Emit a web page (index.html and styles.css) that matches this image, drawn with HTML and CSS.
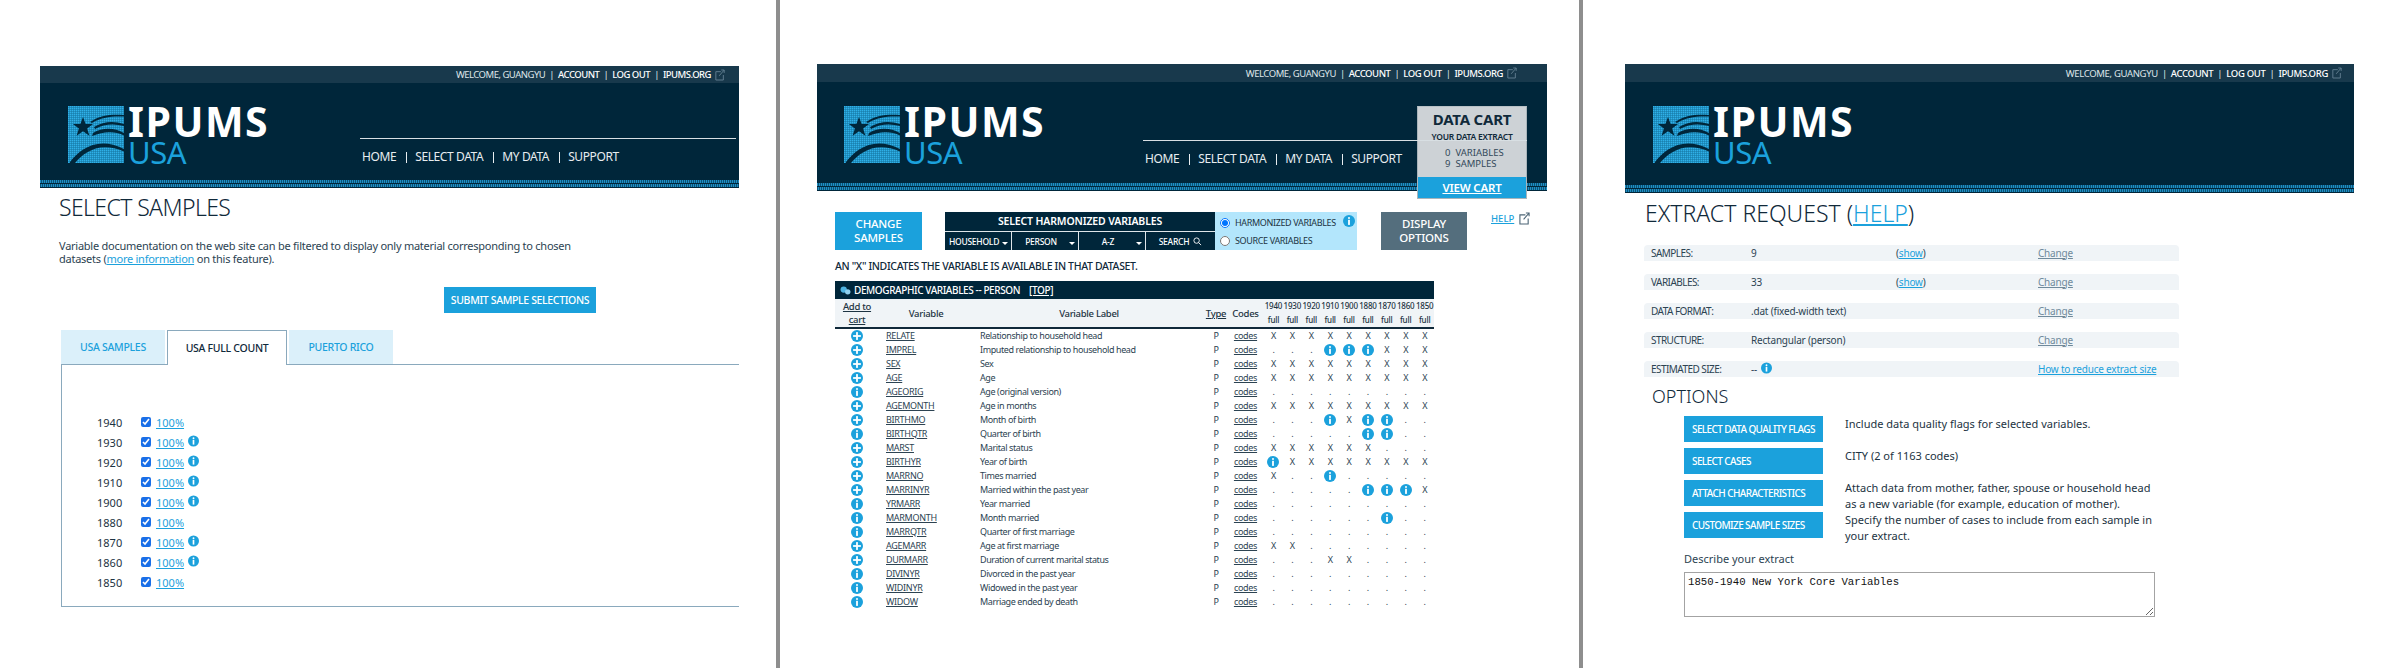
FILE: index.html
```html
<!DOCTYPE html>
<html lang="en">
<head>
<meta charset="utf-8">
<title>IPUMS USA</title>
<link rel="stylesheet" href="styles.css">
</head>
<body>
<svg class="defs" width="0" height="0" aria-hidden="true">
  <defs>
    <symbol id="i-info" viewBox="0 0 20 20"><circle cx="10" cy="10" r="10" fill="#1ba1dc"/><circle cx="10" cy="5" r="1.7" fill="#fff"/><rect x="8.5" y="8" width="3" height="8.5" fill="#fff"/></symbol>
    <symbol id="i-add" viewBox="0 0 20 20"><circle cx="10" cy="10" r="10" fill="#1ba1dc"/><rect x="8.5" y="3.5" width="3" height="13" fill="#fff"/><rect x="3.5" y="8.5" width="13" height="3" fill="#fff"/></symbol>
    <symbol id="i-ext" viewBox="0 0 12 14"><path d="M7 3H1v10h9V7" fill="none" stroke="currentColor" stroke-width="1.2"/><path d="M5 8l6-7M7.5 1H11v3.5" fill="none" stroke="currentColor" stroke-width="1.2"/></symbol>
    <pattern id="dots" width="2" height="2" patternUnits="userSpaceOnUse"><rect width="2" height="2" fill="#12739f"/><rect width="1.5" height="1.5" fill="#2fb0e8"/></pattern>
    <symbol id="i-flag" viewBox="0 0 56 57">
      <rect width="56" height="57" fill="url(#dots)"/>
      <path d="M15 11l2.600 7h7.500l-6 4.500 2.300 7.200-6.400-4.400-6.400 4.400 2.300-7.200-6-4.500h7.500z" fill="#00263a"/>
      <path d="M22 16C32 9 44 8 56 9v1.500C44 10 33 11 24 17zM26 21C36 15 46 15 56 18v2C46 17.500 36 18 27 23zM25 27C35 21 47 22 56 27v2.500C47 25 36 25 24 30z" fill="#00263a"/>
      <path d="M2 56C12 43 30 30 56 43v2.500C32 35 16 46 7 57H2z" fill="#00263a"/>
    </symbol>
  </defs>
</svg>

<main class="page">

  <section class="panel panel-one">
    <header class="site-head">
      <div class="top-bar"><span>WELCOME, GUANGYU</span><b class="sep">|</b><strong>ACCOUNT</strong><b class="sep">|</b><strong>LOG OUT</strong><b class="sep">|</b><strong>IPUMS.ORG</strong><svg class="ext"><use href="#i-ext"/></svg></div>
      <div class="brand-row">
        <div class="logo"><svg class="flag"><use href="#i-flag"/></svg><div class="word"><div class="ipums">IPUMS</div><div class="usa">USA</div></div></div>
        <nav class="nav"><a>HOME</a><a>SELECT DATA</a><a>MY DATA</a><a>SUPPORT</a></nav>
      </div>
      <div class="strip"></div>
    </header>
    <div class="one-body">
      <h1 class="title">SELECT SAMPLES</h1>
      <p class="intro">Variable documentation on the web site can be filtered to display only material corresponding to chosen datasets (<a class="lnk">more information</a> on this feature).</p>
      <div class="submit-row"><a class="btn submit">SUBMIT SAMPLE SELECTIONS</a></div>
      <div class="tabs"><a class="tab">USA SAMPLES</a><a class="tab active">USA FULL COUNT</a><a class="tab">PUERTO RICO</a></div>
      <div class="tab-box">
        <div class="sample"><span class="yr">1940</span><input type="checkbox" checked><a class="lnk">100%</a></div>
        <div class="sample"><span class="yr">1930</span><input type="checkbox" checked><a class="lnk">100%</a><svg class="note"><use href="#i-info"/></svg></div>
        <div class="sample"><span class="yr">1920</span><input type="checkbox" checked><a class="lnk">100%</a><svg class="note"><use href="#i-info"/></svg></div>
        <div class="sample"><span class="yr">1910</span><input type="checkbox" checked><a class="lnk">100%</a><svg class="note"><use href="#i-info"/></svg></div>
        <div class="sample"><span class="yr">1900</span><input type="checkbox" checked><a class="lnk">100%</a><svg class="note"><use href="#i-info"/></svg></div>
        <div class="sample"><span class="yr">1880</span><input type="checkbox" checked><a class="lnk">100%</a></div>
        <div class="sample"><span class="yr">1870</span><input type="checkbox" checked><a class="lnk">100%</a><svg class="note"><use href="#i-info"/></svg></div>
        <div class="sample"><span class="yr">1860</span><input type="checkbox" checked><a class="lnk">100%</a><svg class="note"><use href="#i-info"/></svg></div>
        <div class="sample"><span class="yr">1850</span><input type="checkbox" checked><a class="lnk">100%</a></div>
      </div>
    </div>
  </section>

  <section class="panel panel-two">
    <header class="site-head">
      <div class="top-bar"><span>WELCOME, GUANGYU</span><b class="sep">|</b><strong>ACCOUNT</strong><b class="sep">|</b><strong>LOG OUT</strong><b class="sep">|</b><strong>IPUMS.ORG</strong><svg class="ext"><use href="#i-ext"/></svg></div>
      <div class="brand-row">
        <div class="logo"><svg class="flag"><use href="#i-flag"/></svg><div class="word"><div class="ipums">IPUMS</div><div class="usa">USA</div></div></div>
        <nav class="nav"><a>HOME</a><a>SELECT DATA</a><a>MY DATA</a><a>SUPPORT</a></nav>
      </div>
      <div class="strip"></div>
      <aside class="cart">
        <div class="cart-main">
          <div class="cart-title">DATA CART</div>
          <div class="cart-sub">YOUR DATA EXTRACT</div>
          <div class="cart-line"><span>0</span><span>VARIABLES</span></div>
          <div class="cart-line"><span>9</span><span>SAMPLES</span></div>
        </div>
        <a class="cart-view">VIEW CART</a>
      </aside>
    </header>
    <div class="two-body">
      <div class="controls">
        <a class="btn change">CHANGE<br>SAMPLES</a>
        <div class="picker">
          <div class="picker-title">SELECT HARMONIZED VARIABLES</div>
          <div class="picker-tabs">
            <span class="pick">HOUSEHOLD<i class="caret"></i></span>
            <span class="pick">PERSON<i class="caret"></i></span>
            <span class="pick">A-Z<i class="caret"></i></span>
            <span class="pick">SEARCH<svg class="mag" viewBox="0 0 10 10"><circle cx="4" cy="4" r="3" fill="none" stroke="#fff"/><path d="M6.200 6.200L9 9" stroke="#fff"/></svg></span>
          </div>
        </div>
        <div class="radios">
          <label class="radio"><input type="radio" name="v" checked>HARMONIZED VARIABLES</label>
          <label class="radio"><input type="radio" name="v">SOURCE VARIABLES</label>
          <svg class="radio-info"><use href="#i-info"/></svg>
        </div>
        <a class="btn display">DISPLAY<br>OPTIONS</a>
        <a class="help"><span>HELP</span><svg class="help-ext"><use href="#i-ext"/></svg></a>
      </div>
      <p class="legend">AN "X" INDICATES THE VARIABLE IS AVAILABLE IN THAT DATASET.</p>
      <table class="vars">
        <colgroup><col class="c-add"><col class="c-var"><col class="c-label"><col class="c-type"><col class="c-codes"><col class="c-y"><col class="c-y"><col class="c-y"><col class="c-y"><col class="c-y"><col class="c-y"><col class="c-y"><col class="c-y"><col class="c-y"></colgroup>
        <thead>
          <tr class="group"><th colspan="14"><svg class="group-ic" viewBox="0 0 12 10"><circle cx="4" cy="4" r="3.500" fill="#4fb3e0"/><circle cx="8.500" cy="6.500" r="3" fill="#8fd0ee"/></svg>DEMOGRAPHIC VARIABLES -- PERSON<u class="top-link">[TOP]</u></th></tr>
          <tr class="cols">
            <th><u>Add to<br>cart</u></th><th>Variable</th><th>Variable Label</th><th><u>Type</u></th><th>Codes</th>
            <th class="y">1940<br>full</th><th class="y">1930<br>full</th><th class="y">1920<br>full</th><th class="y">1910<br>full</th><th class="y">1900<br>full</th><th class="y">1880<br>full</th><th class="y">1870<br>full</th><th class="y">1860<br>full</th><th class="y">1850<br>full</th>
          </tr>
        </thead>
        <tbody>
          <tr><td><svg class="ic"><use href="#i-add"/></svg></td><td class="v"><u>RELATE</u></td><td class="l">Relationship to household head</td><td>P</td><td><u>codes</u></td><td>X</td><td>X</td><td>X</td><td>X</td><td>X</td><td>X</td><td>X</td><td>X</td><td>X</td></tr>
          <tr><td><svg class="ic"><use href="#i-add"/></svg></td><td class="v"><u>IMPREL</u></td><td class="l">Imputed relationship to household head</td><td>P</td><td><u>codes</u></td><td>.</td><td>.</td><td>.</td><td><svg class="ic"><use href="#i-info"/></svg></td><td><svg class="ic"><use href="#i-info"/></svg></td><td><svg class="ic"><use href="#i-info"/></svg></td><td>X</td><td>X</td><td>X</td></tr>
          <tr><td><svg class="ic"><use href="#i-add"/></svg></td><td class="v"><u>SEX</u></td><td class="l">Sex</td><td>P</td><td><u>codes</u></td><td>X</td><td>X</td><td>X</td><td>X</td><td>X</td><td>X</td><td>X</td><td>X</td><td>X</td></tr>
          <tr><td><svg class="ic"><use href="#i-add"/></svg></td><td class="v"><u>AGE</u></td><td class="l">Age</td><td>P</td><td><u>codes</u></td><td>X</td><td>X</td><td>X</td><td>X</td><td>X</td><td>X</td><td>X</td><td>X</td><td>X</td></tr>
          <tr><td><svg class="ic"><use href="#i-info"/></svg></td><td class="v"><u>AGEORIG</u></td><td class="l">Age (original version)</td><td>P</td><td><u>codes</u></td><td>.</td><td>.</td><td>.</td><td>.</td><td>.</td><td>.</td><td>.</td><td>.</td><td>.</td></tr>
          <tr><td><svg class="ic"><use href="#i-add"/></svg></td><td class="v"><u>AGEMONTH</u></td><td class="l">Age in months</td><td>P</td><td><u>codes</u></td><td>X</td><td>X</td><td>X</td><td>X</td><td>X</td><td>X</td><td>X</td><td>X</td><td>X</td></tr>
          <tr><td><svg class="ic"><use href="#i-add"/></svg></td><td class="v"><u>BIRTHMO</u></td><td class="l">Month of birth</td><td>P</td><td><u>codes</u></td><td>.</td><td>.</td><td>.</td><td><svg class="ic"><use href="#i-info"/></svg></td><td>X</td><td><svg class="ic"><use href="#i-info"/></svg></td><td><svg class="ic"><use href="#i-info"/></svg></td><td>.</td><td>.</td></tr>
          <tr><td><svg class="ic"><use href="#i-info"/></svg></td><td class="v"><u>BIRTHQTR</u></td><td class="l">Quarter of birth</td><td>P</td><td><u>codes</u></td><td>.</td><td>.</td><td>.</td><td>.</td><td>.</td><td><svg class="ic"><use href="#i-info"/></svg></td><td><svg class="ic"><use href="#i-info"/></svg></td><td>.</td><td>.</td></tr>
          <tr><td><svg class="ic"><use href="#i-add"/></svg></td><td class="v"><u>MARST</u></td><td class="l">Marital status</td><td>P</td><td><u>codes</u></td><td>X</td><td>X</td><td>X</td><td>X</td><td>X</td><td>X</td><td>.</td><td>.</td><td>.</td></tr>
          <tr><td><svg class="ic"><use href="#i-add"/></svg></td><td class="v"><u>BIRTHYR</u></td><td class="l">Year of birth</td><td>P</td><td><u>codes</u></td><td><svg class="ic"><use href="#i-info"/></svg></td><td>X</td><td>X</td><td>X</td><td>X</td><td>X</td><td>X</td><td>X</td><td>X</td></tr>
          <tr><td><svg class="ic"><use href="#i-add"/></svg></td><td class="v"><u>MARRNO</u></td><td class="l">Times married</td><td>P</td><td><u>codes</u></td><td>X</td><td>.</td><td>.</td><td><svg class="ic"><use href="#i-info"/></svg></td><td>.</td><td>.</td><td>.</td><td>.</td><td>.</td></tr>
          <tr><td><svg class="ic"><use href="#i-add"/></svg></td><td class="v"><u>MARRINYR</u></td><td class="l">Married within the past year</td><td>P</td><td><u>codes</u></td><td>.</td><td>.</td><td>.</td><td>.</td><td>.</td><td><svg class="ic"><use href="#i-info"/></svg></td><td><svg class="ic"><use href="#i-info"/></svg></td><td><svg class="ic"><use href="#i-info"/></svg></td><td>X</td></tr>
          <tr><td><svg class="ic"><use href="#i-info"/></svg></td><td class="v"><u>YRMARR</u></td><td class="l">Year married</td><td>P</td><td><u>codes</u></td><td>.</td><td>.</td><td>.</td><td>.</td><td>.</td><td>.</td><td>.</td><td>.</td><td>.</td></tr>
          <tr><td><svg class="ic"><use href="#i-info"/></svg></td><td class="v"><u>MARMONTH</u></td><td class="l">Month married</td><td>P</td><td><u>codes</u></td><td>.</td><td>.</td><td>.</td><td>.</td><td>.</td><td>.</td><td><svg class="ic"><use href="#i-info"/></svg></td><td>.</td><td>.</td></tr>
          <tr><td><svg class="ic"><use href="#i-info"/></svg></td><td class="v"><u>MARRQTR</u></td><td class="l">Quarter of first marriage</td><td>P</td><td><u>codes</u></td><td>.</td><td>.</td><td>.</td><td>.</td><td>.</td><td>.</td><td>.</td><td>.</td><td>.</td></tr>
          <tr><td><svg class="ic"><use href="#i-add"/></svg></td><td class="v"><u>AGEMARR</u></td><td class="l">Age at first marriage</td><td>P</td><td><u>codes</u></td><td>X</td><td>X</td><td>.</td><td>.</td><td>.</td><td>.</td><td>.</td><td>.</td><td>.</td></tr>
          <tr><td><svg class="ic"><use href="#i-add"/></svg></td><td class="v"><u>DURMARR</u></td><td class="l">Duration of current marital status</td><td>P</td><td><u>codes</u></td><td>.</td><td>.</td><td>.</td><td>X</td><td>X</td><td>.</td><td>.</td><td>.</td><td>.</td></tr>
          <tr><td><svg class="ic"><use href="#i-info"/></svg></td><td class="v"><u>DIVINYR</u></td><td class="l">Divorced in the past year</td><td>P</td><td><u>codes</u></td><td>.</td><td>.</td><td>.</td><td>.</td><td>.</td><td>.</td><td>.</td><td>.</td><td>.</td></tr>
          <tr><td><svg class="ic"><use href="#i-info"/></svg></td><td class="v"><u>WIDINYR</u></td><td class="l">Widowed in the past year</td><td>P</td><td><u>codes</u></td><td>.</td><td>.</td><td>.</td><td>.</td><td>.</td><td>.</td><td>.</td><td>.</td><td>.</td></tr>
          <tr><td><svg class="ic"><use href="#i-info"/></svg></td><td class="v"><u>WIDOW</u></td><td class="l">Marriage ended by death</td><td>P</td><td><u>codes</u></td><td>.</td><td>.</td><td>.</td><td>.</td><td>.</td><td>.</td><td>.</td><td>.</td><td>.</td></tr>
        </tbody>
      </table>
    </div>
  </section>

  <section class="panel panel-three">
    <header class="site-head">
      <div class="top-bar"><span>WELCOME, GUANGYU</span><b class="sep">|</b><strong>ACCOUNT</strong><b class="sep">|</b><strong>LOG OUT</strong><b class="sep">|</b><strong>IPUMS.ORG</strong><svg class="ext"><use href="#i-ext"/></svg></div>
      <div class="brand-row">
        <div class="logo"><svg class="flag"><use href="#i-flag"/></svg><div class="word"><div class="ipums">IPUMS</div><div class="usa">USA</div></div></div>
      </div>
      <div class="strip"></div>
    </header>
    <div class="three-body">
      <h1 class="title">EXTRACT REQUEST (<a class="lnk">HELP</a>)</h1>
      <div class="summary">
        <div class="sum-row"><span class="k">SAMPLES:</span><span>9</span><span>(<a class="lnk">show</a>)</span><a class="chg">Change</a></div>
        <div class="sum-row"><span class="k">VARIABLES:</span><span>33</span><span>(<a class="lnk">show</a>)</span><a class="chg">Change</a></div>
        <div class="sum-row"><span class="k">DATA FORMAT:</span><span>.dat (fixed-width text)</span><span></span><a class="chg">Change</a></div>
        <div class="sum-row"><span class="k">STRUCTURE:</span><span>Rectangular (person)</span><span></span><a class="chg">Change</a></div>
        <div class="sum-row"><span class="k">ESTIMATED SIZE:</span><span class="est">--<svg class="note"><use href="#i-info"/></svg></span><span></span><a class="lnk">How to reduce extract size</a></div>
      </div>
      <h2 class="options-title">OPTIONS</h2>
      <div class="options">
        <a class="btn opt">SELECT DATA QUALITY FLAGS</a><p class="opt-text">Include data quality flags for selected variables.</p>
        <a class="btn opt">SELECT CASES</a><p class="opt-text">CITY (2 of 1163 codes)</p>
        <a class="btn opt">ATTACH CHARACTERISTICS</a><p class="opt-text">Attach data from mother, father, spouse or household head as a new variable (for example, education of mother).</p>
        <a class="btn opt">CUSTOMIZE SAMPLE SIZES</a><p class="opt-text">Specify the number of cases to include from each sample in your extract.</p>
      </div>
      <div class="describe">
        <label class="desc-label" for="desc">Describe your extract</label>
        <textarea id="desc" class="desc-box">1850-1940 New York Core Variables</textarea>
      </div>
    </div>
  </section>

</main>
</body>
</html>
```
FILE: styles.css
```css
* { box-sizing: border-box; }
html, body { margin: 0; padding: 0; }
body { width: 2404px; height: 668px; overflow: hidden; background: #fff; color: #1c3342; font-family: "Noto Sans", "Open Sans", sans-serif; font-size: 11px; }
.defs { position: absolute; }
a { color: inherit; }
.lnk { color: #1ba1dc; text-decoration: underline; }

.page { display: flex; height: 668px; }
.panel { height: 668px; overflow: hidden; flex: none; }
.panel-one { width: 780px; padding: 66px 37px 0 40px; border-right: 4px solid #8e8e8e; }
.panel-two { width: 803px; padding: 64px 32px 0 37px; border-right: 4px solid #8e8e8e; }
.panel-three { width: 821px; padding: 64px 50px 0 42px; }

/* header */
.site-head { position: relative; background: #00263a; color: #fff; display: flex; flex-direction: column; }
.panel-one .site-head { height: 122px; }
.panel-two .site-head { height: 127px; }
.panel-three .site-head { height: 129px; }
.top-bar { height: 17px; background: #18394c; display: flex; justify-content: flex-end; align-items: center; padding-right: 14px; font-size: 9.500px; letter-spacing: -.5px; color: #dfe6ea; }
.panel-two .top-bar { height: 18px; padding-right: 30px; letter-spacing: -.45px; }
.panel-three .top-bar { height: 18px; padding-right: 12px; letter-spacing: -.33px; }
.top-bar strong { font-weight: 500; color: #fff; }
.sep { font-weight: 400; margin: 0 4px; }
.ext { width: 10px; height: 12px; margin-left: 4px; color: #5d7a8c; }
.brand-row { flex: 1; display: flex; position: relative; }
.logo { display: flex; padding: 23px 0 0 28px; gap: 4px; }
.panel-two .logo { padding: 24px 0 0 27px; }
.panel-three .logo { padding: 24px 0 0 28px; }
.flag { width: 56px; height: 57px; }
.word { display: flex; flex-direction: column; }
.ipums { font-size: 41px; line-height: 30px; height: 31px; font-weight: 700; color: #fff; letter-spacing: 1.500px; }
.usa { font-size: 31px; line-height: 28px; color: #1ba1dc; margin-top: 1px; letter-spacing: -.5px; }
.nav { position: absolute; left: 320px; right: 3px; top: 55px; border-top: 1px solid #d8dfe3; padding: 10px 2px 0; display: flex; font-size: 12px; letter-spacing: -.4px; line-height: 16px; color: #e8edf0; }
.panel-two .nav { left: 326px; right: 20px; top: 58px; z-index: 3; }
.nav a + a { margin-left: 10px; padding-left: 9px; background: linear-gradient(#e8edf0, #e8edf0) left 3px / 1px 11px no-repeat; }
.strip { height: 8px; background-color: #00263a; background-image: repeating-linear-gradient(90deg, #1f90c4 0 1px, #0b5276 1px 2px), repeating-linear-gradient(90deg, #0b5276 0 1px, #1f90c4 1px 2px); background-size: 100% 3px, 100% 3px; background-position: 0 0, 0 4px; background-repeat: no-repeat; }

/* shared */
.title { margin: 0; font-weight: 300; font-size: 23px; line-height: 30px; color: #10293a; }
.btn { display: flex; align-items: center; background: #1ba1dc; color: #fff; font-weight: 500; text-decoration: none; white-space: nowrap; }

/* panel one */
.one-body { padding: 0 0 0 19px; }
.one-body .title { margin-top: 4px; letter-spacing: -.6px; }
.intro { width: 515px; margin: 17px 0 0; line-height: 13px; font-size: 11px; letter-spacing: -.25px; color: #2c4352; }
.submit-row { padding: 22px 0 0 385px; }
.submit { width: 152px; height: 26px; justify-content: center; font-size: 10.500px; letter-spacing: -.35px; }
.tabs { display: flex; margin: 17px 0 0 2px; gap: 2px; position: relative; z-index: 1; height: 34px; font-weight: 500; font-size: 10.500px; letter-spacing: -.3px; }
.tab { width: 104px; background: #dbf0fa; color: #1ba1dc; display: flex; align-items: center; justify-content: center; }
.tab.active { width: 120px; margin: 0; background: #fff; color: #10293a; border: 1px solid #8aa9bd; border-bottom: 0; height: 35px; }
.tab-box { margin-left: 2px; height: 243px; border: 1px solid #8aa9bd; border-right: 0; padding: 47px 0 0 35px; }
.sample { display: flex; align-items: center; height: 20px; font-size: 11px; }
.yr { width: 44px; color: #1c3342; }
.sample input { appearance: auto; width: 10px; height: 10px; margin: 0 5px 0 0; accent-color: #1a6fe8; }
.note { width: 11px; height: 12px; margin: -3px 0 0 4px; }

/* cart */
.cart { position: absolute; left: 600px; top: 42px; width: 110px; border: 1px solid #a9b4ba; border-top: 1px solid #b8c1c6; background: #cdd2d6; color: #10293a; z-index: 2; }
.cart-main { height: 70px; padding-top: 2px; display: flex; flex-direction: column; align-items: center; }
.cart-title { font-size: 15px; line-height: 20px; font-weight: 700; letter-spacing: -.2px; }
.cart-sub { font-size: 8.500px; line-height: 11px; font-weight: 600; margin-top: 2px; margin-bottom: 5px; letter-spacing: -.25px; }
.cart-line { display: flex; gap: 5px; font-size: 9.500px; line-height: 11px; color: #33495a; width: 54px; }
.cart-view { display: block; height: 21px; background: #1ba1dc; color: #fff; text-align: center; font-size: 11.500px; line-height: 21px; font-weight: 600; letter-spacing: -.2px; text-decoration: underline; }

/* panel two */
.two-body { padding: 21px 0 0 18px; position: relative; }
.controls { display: flex; height: 38px; }
.change { width: 87px; justify-content: center; text-align: center; font-size: 11.500px; line-height: 14px; letter-spacing: -.2px; }
.picker { width: 270px; margin-left: 23px; background: #00263a; color: #fff; display: flex; flex-direction: column; }
.picker-title { height: 19px; text-align: center; font-size: 10.500px; line-height: 19px; font-weight: 600; letter-spacing: -.15px; }
.picker-tabs { flex: 1; display: grid; grid-template-columns: 67px 67px 67px 1fr; border-top: 1px solid #dfe6ea; }
.pick { position: relative; display: flex; align-items: center; justify-content: center; font-size: 8.500px; letter-spacing: -.25px; font-weight: 500; border-right: 1px solid #dfe6ea; padding-right: 8px; }
.pick:last-child { border-right: 0; padding-right: 0; }
.caret { position: absolute; right: 3px; top: 10px; border: 3px solid transparent; border-top-color: #fff; }
.mag { width: 9px; height: 9px; margin-left: 4px; }
.radios { position: relative; width: 142px; background: #b3e6fc; padding: 3px 0 0 5px; display: flex; flex-direction: column; gap: 3px; }
.radio { display: flex; align-items: center; height: 15px; font-size: 9px; letter-spacing: -.35px; color: #1c3342; }
.radio input { margin: 0 5px 0 0; width: 10px; height: 10px; }
.radio-info { position: absolute; right: 2px; top: 3px; width: 12px; height: 12px; }
.display { width: 86px; margin-left: 24px; background: #546e7d; justify-content: center; text-align: center; font-size: 11.500px; line-height: 14px; letter-spacing: -.2px; }
.help { display: flex; margin-left: 24px; gap: 5px; font-size: 9.500px; color: #1ba1dc; font-weight: 500; height: 14px; text-decoration: underline; padding-top: 0; }
.help-ext { width: 11px; height: 13px; color: #4c6576; }
.legend { margin: 9px 0 0; font-size: 10.500px; letter-spacing: -.35px; line-height: 14px; font-weight: 500; color: #10293a; height: 14px; }

.vars { margin-top: 8px; width: 599px; table-layout: fixed; border-collapse: collapse; font-size: 9px; letter-spacing: -.3px; color: #2c4352; }
.c-add { width: 44px; } .c-var { width: 94px; } .c-label { width: 232px; } .c-type { width: 22px; } .c-codes { width: 37px; } .c-y { width: 18.900px; }
.vars th { padding: 0; font-weight: 500; color: #1c3342; }
.group th { background: #00263a; color: #fff; height: 18px; text-align: left; padding-left: 5px; font-size: 10px; letter-spacing: -.4px; }
.group-ic { width: 11px; height: 9px; margin-right: 3px; vertical-align: -1px; }
.top-link { margin-left: 9px; }
.cols th { height: 27px; background: #f0f4f7; line-height: 13px; border-bottom: 2px solid #10293a; text-align: center; font-size: 9.500px; letter-spacing: -.3px; }
.cols th.y { font-size: 8px; line-height: 14px; letter-spacing: -.2px; }
.vars td { padding: 0; height: 14px; line-height: 13px; text-align: center; overflow: hidden; white-space: nowrap; }
.vars td.v, .vars td.l { text-align: left; padding-left: 7px; }
.vars td.l { letter-spacing: -.4px; }
.ic { display: block; width: 12px; height: 12px; margin: 1px auto 0; }

/* panel three */
.three-body { padding: 5px 0 0 20px; }
.summary { margin: 17px 0 0 -1px; width: 535px; display: flex; flex-direction: column; gap: 13px; }
.sum-row { height: 16px; background: #f0f4f7; border-radius: 4px 4px 0 0; display: grid; grid-template-columns: 100px 145px 142px 1fr; padding-left: 7px; font-size: 10px; letter-spacing: -.2px; line-height: 15px; color: #2c4352; align-items: center; }
.k { letter-spacing: -.55px; }
.chg { color: #6f8a9c; text-decoration: underline; }
.est { display: flex; align-items: center; }
.options-title { margin: 7px 0 0 7px; font-weight: 300; font-size: 18px; line-height: 24px; color: #10293a; }
.options { margin: 8px 0 0 39px; display: grid; grid-template-columns: 139px 1fr; grid-auto-rows: 26px; row-gap: 6px; column-gap: 22px; width: 470px; }
.opt { padding-left: 8px; font-size: 10px; letter-spacing: -.6px; }
.opt-text { margin: 0; font-size: 11px; line-height: 15.500px; color: #1c3342; }
.describe { margin: 14px 0 0 39px; }
.desc-label { display: block; font-size: 11px; line-height: 14px; color: #2c4352; }
.desc-box { display: block; margin-top: 6px; width: 471px; height: 45px; padding: 3px; font-family: "Liberation Mono", monospace; font-size: 10.670px; color: #111; border: 1px solid #a3a3a3; border-top-width: 1.500px; resize: both; border-radius: 0; }
```
